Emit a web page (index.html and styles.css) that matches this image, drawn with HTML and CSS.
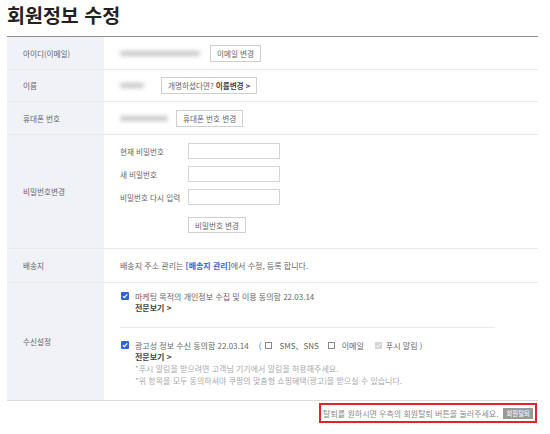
FILE: index.html
```html
<!DOCTYPE html>
<html lang="ko">
<head>
<meta charset="utf-8">
<title>회원정보 수정</title>
<link rel="stylesheet" href="styles.css">
</head>
<body>
<div class="page">
  <h1 class="title">회원정보 수정</h1>
  <div class="table">
    <div class="row r1">
      <div class="th">아이디(이메일)</div>
      <div class="td"><span class="blur b-email" aria-hidden="true"></span><button class="btn">이메일 변경</button></div>
    </div>
    <div class="row r2">
      <div class="th">이름</div>
      <div class="td"><span class="blur b-name" aria-hidden="true"></span><button class="btn btn-name">개명하셨다면? <b>이름변경 &gt;</b></button></div>
    </div>
    <div class="row r3">
      <div class="th">휴대폰 번호</div>
      <div class="td"><span class="blur b-phone" aria-hidden="true"></span><button class="btn">휴대폰 번호 변경</button></div>
    </div>
    <div class="row r4">
      <div class="th">비밀번호변경</div>
      <div class="td td-pw">
        <div class="pw">
          <span class="pw-label">현재 비밀번호</span><input class="input" type="password">
          <span class="pw-label">새 비밀번호</span><input class="input" type="password">
          <span class="pw-label">비밀번호 다시 입력</span><input class="input" type="password">
        </div>
        <button class="btn btn-pw">비밀번호 변경</button>
      </div>
    </div>
    <div class="row r5">
      <div class="th">배송지</div>
      <div class="td">배송지 주소 관리는&nbsp;<b class="link">[배송지 관리]</b>에서 수정, 등록 합니다.</div>
    </div>
    <div class="row r6">
      <div class="th">수신설정</div>
      <div class="td td-consent">
        <div class="consent">
          <svg class="chk" viewBox="0 0 8 8"><rect width="8" height="8" rx="1" fill="#2f63d6"/><polyline points="1.8,4.2 3.3,5.7 6.3,2.4" fill="none" stroke="#fff" stroke-width="1.2"/></svg>
          <span>마케팅 목적의 개인정보 수집 및 이용 동의함 22.03.14</span>
        </div>
        <div class="more">전문보기 &gt;</div>
        <div class="divider"></div>
        <div class="consent consent2">
          <svg class="chk" viewBox="0 0 8 8"><rect width="8" height="8" rx="1" fill="#2f63d6"/><polyline points="1.8,4.2 3.3,5.7 6.3,2.4" fill="none" stroke="#fff" stroke-width="1.2"/></svg>
          <span>광고성 정보 수신 동의함 22.03.14</span>
          <span class="paren">(</span>
          <span class="box"></span>
          <span class="opt">SMS、SNS</span>
          <span class="box"></span>
          <span class="opt">이메일</span>
          <svg class="box-dis" viewBox="0 0 7 7"><rect width="7" height="7" fill="#d6d6d6"/><polyline points="1.5,3.6 2.9,5 5.5,2.1" fill="none" stroke="#fff" stroke-width="1"/></svg>
          <span class="opt">푸시 알림 )</span>
        </div>
        <div class="more">전문보기 &gt;</div>
        <div class="note">*푸시 알림을 받으려면 고객님 기기에서 알림을 허용해주세요.</div>
        <div class="note">*위 항목을 모두 동의하셔야 쿠팡의 맞춤형 쇼핑혜택(광고)을 받으실 수 있습니다.</div>
      </div>
    </div>
  </div>
  <div class="withdraw-wrap">
    <div class="withdraw">
      <span>탈퇴를 원하시면 우측의 회원탈퇴 버튼을 눌러주세요.</span>
      <button class="btn-dark">회원탈퇴</button>
    </div>
  </div>
</div>
</body>
</html>
```

FILE: styles.css
```css
* { box-sizing: border-box; }
html, body { margin: 0; padding: 0; background: #fff; }
body {
  font-family: "Noto Sans CJK KR", "Noto Sans", sans-serif;
  font-size: 8px;
  color: #666;
}
.page {
  width: 534px;
  padding: 3px 0 0 7px;
}
.title {
  margin: 0;
  height: 25px;
  font-size: 19.5px;
  line-height: 24px;
  font-weight: 700;
  color: #222;
}
.table {
  width: 531px;
  margin-top: 8px;
  border-top: 1px solid #8e8e8e;
  border-bottom: 1px solid #dcdcdc;
}
.row {
  display: grid;
  grid-template-columns: 97px 1fr;
  border-bottom: 1px solid #e9e9e9;
}
.row:last-child { border-bottom: none; }
.r1 { height: 33px; }
.r2 { height: 32px; }
.r3 { height: 33px; }
.r4 { height: 114px; }
.r5 { height: 34px; }
.r6 { height: 117px; }
.th {
  background: #f1f2f8;
  padding-left: 16px;
  display: flex;
  align-items: center;
  color: #666;
  font-size: 7.6px;
}
.td {
  padding-left: 16px;
  display: flex;
  align-items: center;
  color: #666;
}
.blur {
  display: inline-block;
  background: #c6c6c6;
  filter: blur(2px);
  height: 5px;
  border-radius: 2px;
  flex: none;
}
.b-email { width: 80px; margin-right: 10px; }
.b-name { width: 24px; margin-right: 17px; }
.b-phone { width: 48px; margin-right: 8px; }
.btn {
  font-family: inherit;
  font-size: 7.6px;
  color: #666;
  background: #fff;
  border: 1px solid #cfcfcf;
  height: 17px;
  padding: 0 6px;
  line-height: 15px;
  margin: 0;
  white-space: nowrap;
}
.btn b { color: #444; font-weight: 700; }
.td-pw {
  flex-direction: column;
  align-items: flex-start;
  justify-content: flex-start;
  padding-top: 8px;
}
.pw {
  display: grid;
  grid-template-columns: 68px 92px;
  row-gap: 7px;
  align-items: center;
}
.pw-label { white-space: nowrap; font-size: 7.6px; }
.input {
  height: 16px;
  width: 92px;
  margin: 0;
  border: 1px solid #d5d5d5;
  background: #fff;
}
.btn-pw { margin: 12px 0 0 68px; height: 16px; }
.link { color: #3b66d2; font-weight: 700; }
.td-consent {
  flex-direction: column;
  align-items: stretch;
  justify-content: flex-start;
  padding: 7px 43px 0 16px;
}
.consent {
  display: flex;
  align-items: center;
  height: 12px;
  white-space: nowrap;
}
.chk { width: 8px; height: 8px; margin: 0 6px 0 1px; flex: none; }
.more {
  padding-left: 15px;
  height: 12px;
  line-height: 12px;
  font-weight: 700;
  color: #444;
}
.divider {
  border-top: 1px solid #e9e9e9;
  margin: 13px 0 11px;
}
.paren { margin-left: 10px; }
.box {
  width: 7px;
  height: 7px;
  border: 1px solid #888;
  background: #fff;
  margin: 0 7px 0 4px;
  flex: none;
}
.opt + .box { margin-left: 9px; }
.box-dis { width: 7px; height: 7px; margin: 0 4px 0 11px; flex: none; }
.note {
  padding-left: 15px;
  height: 12px;
  line-height: 12px;
  color: #aaa;
  white-space: nowrap;
}
.withdraw-wrap {
  display: flex;
  justify-content: flex-end;
  margin-right: -3px;
  margin-top: 2px;
}
.withdraw {
  display: flex;
  align-items: center;
  height: 20px;
  border: 2px solid #e3222c;
  padding: 0 2px 0 2px;
  color: #888;
  gap: 5px;
  white-space: nowrap;
}
.btn-dark {
  font-family: inherit;
  font-size: 6.4px;
  color: #fff;
  background: #9a9a9a;
  border: none;
  height: 11px;
  line-height: 11px;
  padding: 0 3px;
  margin: 0;
}
```
